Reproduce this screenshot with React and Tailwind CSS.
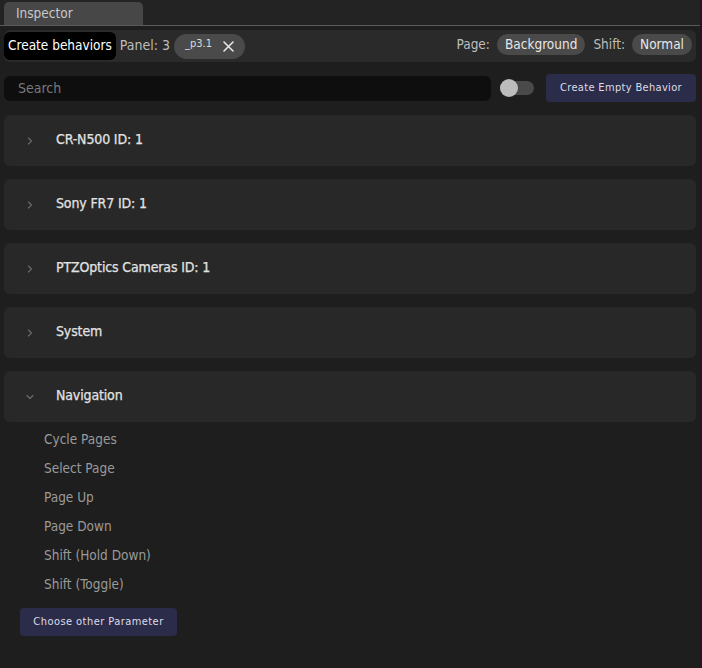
import React, { useState } from 'react'

const groups = ['CR-N500 ID: 1', 'Sony FR7 ID: 1', 'PTZOptics Cameras ID: 1', 'System']
const navItems = ['Cycle Pages', 'Select Page', 'Page Up', 'Page Down', 'Shift (Hold Down)', 'Shift (Toggle)']

function Chevron({ open }) {
  return (
    <svg width="10" height="10" viewBox="0 0 10 10" fill="none" stroke="#6a6a6a" strokeWidth="1.2" strokeLinecap="round" strokeLinejoin="round">
      {open ? <path d="M2 3.5l3 3 3-3" /> : <path d="M3.5 2l3 3-3 3" />}
    </svg>
  )
}

function Group({ title, open }) {
  return (
    <div className="h-[51px] rounded-md bg-[#282828] flex items-center">
      <div className="w-[52px] flex justify-center"><Chevron open={open} /></div>
      <span className="text-[14px] pb-[2px] text-[#e2e2e2] tracking-[-0.01em]" style={{ WebkitTextStroke: '0.25px #e2e2e2' }}>{title}</span>
    </div>
  )
}

export default function App() {
  const [on, setOn] = useState(false)
  return (
    <div className="w-[702px] h-[668px] flex bg-[#1e1e1e] overflow-hidden" style={{ fontFamily: '"DejaVu Sans Condensed", "Liberation Sans Narrow", sans-serif' }}>
      <div className="flex-1 flex flex-col">
        {/* tab strip */}
        <div className="h-[26px] bg-[#232323] border-b border-[#5a5a5a] flex items-end pl-[4px]">
          <div className="w-[139px] h-[23px] bg-[#474747] rounded-t-[5px] px-[12px] text-[13.5px] leading-[23px] text-[#c8c8c8]">Inspector</div>
        </div>

        {/* toolbar */}
        <div className="mx-[4px] mt-[4px] h-[32px] rounded-md bg-[#2a2a2a] flex items-center pr-[4px]">
          <div className="h-[28px] px-[4px] rounded-md bg-black text-[13.5px] leading-[26px] text-white">Create behaviors</div>
          <span className="ml-[4px] text-[14px] leading-[28px] pb-[3px] text-[#bdbdbd]">Panel: 3</span>
          <div className="ml-[4px] h-[25px] rounded-full bg-[#4a4a4a] flex items-center pl-[11px] pr-[11px] gap-[11px]">
            <span className="text-[11px] pb-[3px] text-[#dcdcdc]">_p3.1</span>
            <svg width="11" height="11" viewBox="0 0 11 11" stroke="#e6e6e6" strokeWidth="1.6" strokeLinecap="round"><path d="M1 1l9 9M10 1l-9 9" /></svg>
          </div>
          <div className="flex-1" />
          <span className="text-[13.5px] pb-[3px] text-[#bdbdbd]">Page:</span>
          <div className="ml-[7px] h-[21px] mb-[3px] rounded-full bg-[#4a4a4a] px-[8px] text-[13.5px] leading-[21px] text-[#e6e6e6]">Background</div>
          <span className="ml-[8px] text-[13.5px] pb-[3px] text-[#bdbdbd]">Shift:</span>
          <div className="ml-[7px] h-[21px] mb-[3px] rounded-full bg-[#4a4a4a] px-[8px] text-[13.5px] leading-[21px] text-[#e6e6e6]">Normal</div>
        </div>

        {/* search row */}
        <div className="mx-[4px] mt-[12px] flex items-center">
          <div className="w-[487px] h-[25px] rounded-md bg-[#0e0e0e] flex items-center px-[14px] text-[14px] text-[#7a7a7a]">Search</div>
          <button onClick={() => setOn(!on)} className="ml-[9px] w-[34px] h-[14px] rounded-full bg-[#4a4a4a] relative">
            <span className={`absolute top-[-2px] ${on ? 'left-[16px]' : 'left-0'} w-[18px] h-[18px] rounded-full bg-[#bdbdbd]`} />
          </button>
          <div className="ml-[12px] h-[28px] flex-1 rounded-[4px] bg-[#2b2b4a] flex items-center justify-center text-[11px] tracking-[0.03em] text-[#dcdce6]">Create Empty Behavior</div>
        </div>

        {/* groups */}
        <div className="mx-[4px] mt-[13px] flex flex-col gap-[13px]">
          {groups.map(g => <Group key={g} title={g} />)}
          <Group title="Navigation" open />
        </div>

        <div className="mt-[3px] pl-[44px] flex flex-col">
          {navItems.map(n => (
            <div key={n} className="h-[29px] flex items-center text-[13.5px] text-[#9a9a9a]">{n}</div>
          ))}
        </div>

        <div className="mt-[9px] ml-[20px] w-[157px] h-[28px] rounded-[4px] bg-[#2b2b4a] flex items-center justify-center text-[11px] tracking-[0.04em] text-[#dcdce6]">Choose other Parameter</div>
      </div>
      <div className="w-[2px] bg-[#2a1322]" />
    </div>
  )
}
